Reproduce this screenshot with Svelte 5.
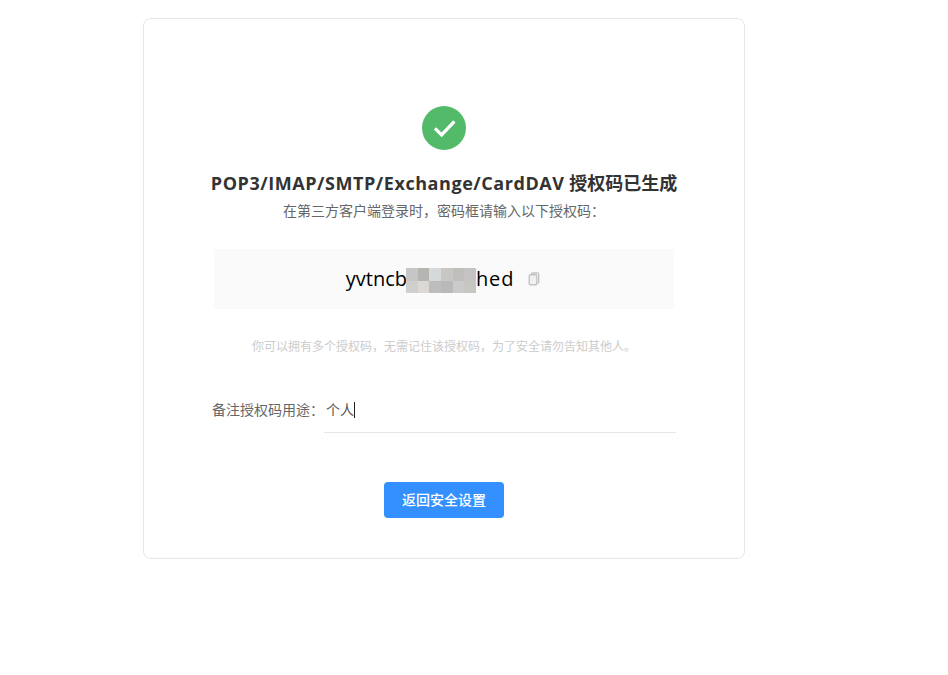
<script>
  const tiles = ['#c6c6c4','#b7b5b2','#d6d9d9','#c9c7c4','#c0bfbe','#c4c3c1','#cfcfce','#dcd9d5','#bdbdbd','#b9b9b9','#cacaca','#c8c6c1'];
</script>

<main class="page">
  <section class="card">
    <div class="badge">
      <svg viewBox="0 0 44 44" width="44" height="44" aria-hidden="true">
        <circle cx="22" cy="22" r="22" fill="#52ba68" />
        <path d="M13 22.4l6.6 6.6L32.4 15.4" fill="none" stroke="#fff" stroke-width="3.3" />
      </svg>
    </div>
    <h1><span class="latin">POP3/IMAP/SMTP/Exchange/CardDAV</span> 授权码已生成</h1>
    <p class="sub">在第三方客户端登录时，密码框请输入以下授权码：</p>

    <div class="code">
      <span class="value">yvtncb<span class="mosaic">{#each tiles as c}<i style="background:{c}"></i>{/each}</span><span class="tail">hed</span></span>
      <svg class="copy" viewBox="0 0 12 14" width="12" height="14" aria-hidden="true">
        <path d="M3.5 2.6V2a1 1 0 0 1 1-1h5.2a1 1 0 0 1 1 1v8a1 1 0 0 1-1 1h-.4" fill="none" stroke="#c4c4c4" stroke-width="1.4" />
        <rect x="1.2" y="2.8" width="7.6" height="10" rx="1.2" fill="#f0f0f0" stroke="#c4c4c4" stroke-width="1.4" />
      </svg>
    </div>

    <p class="hint">你可以拥有多个授权码，无需记住该授权码，为了安全请勿告知其他人。</p>

    <div class="field">
      <span class="label">备注授权码用途：</span>
      <div class="input">个人<span class="caret"></span></div>
    </div>

    <button class="back">返回安全设置</button>
  </section>
</main>

<style>
  :global(body) {
    margin: 0;
    background: #fff;
    font-family: "Open Sans", "Noto Sans CJK SC", sans-serif;
  }
  .page {
    display: flex;
    justify-content: flex-start;
    padding: 18px 0 116px 143px;
    min-height: 541px;
  }
  .card {
    box-sizing: border-box;
    width: 602px;
    height: 541px;
    border: 1px solid #e6e6e6;
    border-radius: 8px;
    display: flex;
    flex-direction: column;
    align-items: center;
    padding-top: 87px;
  }
  .badge {
    height: 44px;
  }
  .badge svg {
    display: block;
  }
  h1 {
    margin: 21px 0 0;
    font-size: 18px;
    line-height: 24px;
    font-weight: 700;
    color: #333;
    white-space: nowrap;
  }
  .latin {
    letter-spacing: 0.55px;
  }
  .sub {
    margin: 7px 0 0;
    font-size: 14px;
    line-height: 18px;
    color: #666;
  }
  .code {
    margin-top: 29px;
    box-sizing: border-box;
    width: 460px;
    height: 60px;
    padding-right: 2px;
    background: #fafafa;
    display: flex;
    align-items: center;
    justify-content: center;
    gap: 14px;
  }
  .value {
    font-size: 20px;
    color: #000;
    display: flex;
    align-items: center;
    line-height: 26px;
  }
  .mosaic {
    width: 70px;
    height: 25px;
    margin: 3px 0 0 -1px;
    display: grid;
    grid-template-columns: repeat(6, 1fr);
    grid-template-rows: repeat(2, 1fr);
  }
  .tail {
    letter-spacing: 0.8px;
  }
  .copy {
    display: block;
  }
  .hint {
    margin: 29px 0 0;
    font-size: 12px;
    line-height: 17px;
    color: #ccc;
  }
  .field {
    margin-top: 37px;
    width: 464px;
    display: flex;
    align-items: flex-start;
    font-size: 14px;
    line-height: 18px;
    color: #666;
  }
  .label {
    width: 112px;
    flex: none;
    padding-top: 9px;
    white-space: nowrap;
  }
  .input {
    flex: 1;
    height: 41px;
    box-sizing: border-box;
    border-bottom: 1px solid #e6e6e6;
    padding: 9px 0 0 2px;
    color: #555;
    display: flex;
    align-items: flex-start;
  }
  .caret {
    width: 1px;
    height: 16px;
    background: #222;
    margin-top: 1px;
  }
  .back {
    margin-top: 49px;
    width: 120px;
    height: 36px;
    border: 0;
    border-radius: 4px;
    padding: 0 0 2px;
    background: #3590ff;
    color: #fff;
    font: 500 14px "Open Sans", "Noto Sans CJK SC", sans-serif;
  }
</style>
